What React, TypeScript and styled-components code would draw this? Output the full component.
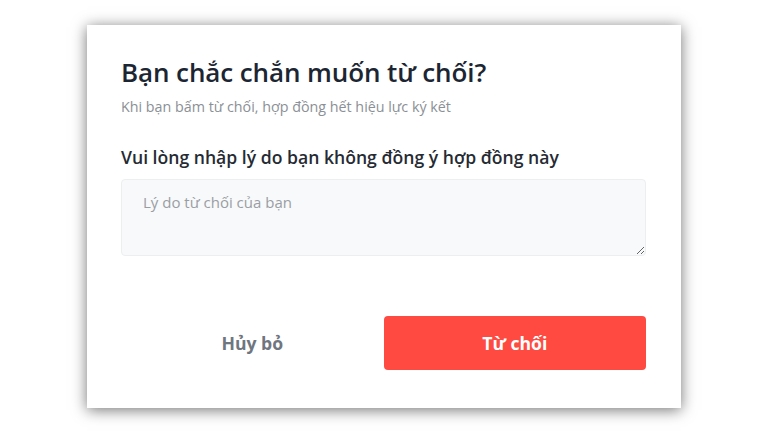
import React from "react";
import styled, { createGlobalStyle } from "styled-components";

const Global = createGlobalStyle`
  html, body { margin: 0; padding: 0; background: #ffffff; }
  * { box-sizing: border-box; }
  body { font-family: "Open Sans", "Noto Sans", sans-serif; }
`;

const Page = styled.div`
  width: 768px;
  height: 432px;
  display: flex;
  align-items: center;
  justify-content: center;
`;

const Dialog = styled.div`
  width: 594px;
  height: 383px;
  background: #ffffff;
  box-shadow: 0 2px 14px rgba(0, 0, 0, 0.55);
  padding: 29px 35px 38px 34px;
  display: flex;
  flex-direction: column;
`;

const Title = styled.h2`
  margin: 0;
  font-size: 26px;
  line-height: 36px;
  font-weight: 600;
  color: #1c2633;
  letter-spacing: -0.1px;
`;

const Subtitle = styled.p`
  margin: 7px 0 0;
  font-size: 14.3px;
  line-height: 20px;
  color: #8b9096;
`;

const Label = styled.label`
  margin-top: 28px;
  font-size: 17.6px;
  line-height: 24px;
  font-weight: 600;
  color: #262b33;
`;

const Reason = styled.textarea`
  margin-top: 10px;
  width: 100%;
  height: 77px;
  resize: vertical;
  border: 1px solid #eceef0;
  border-radius: 4px;
  background: #f8f9fa;
  padding: 12px 21px;
  font-family: "Open Sans", "Noto Sans", sans-serif;
  font-size: 15px;
  line-height: 20px;
  color: #333;
  outline: none;
  &::placeholder { color: #9a9ea4; }
`;

const Actions = styled.div`
  margin-top: auto;
  display: grid;
  grid-template-columns: 1fr 1fr;
`;

const Button = styled.button<{ $primary?: boolean }>`
  height: 54px;
  border: none;
  border-radius: 4px;
  font-family: "Open Sans", "Noto Sans", sans-serif;
  font-size: 17.6px;
  font-weight: 700;
  cursor: pointer;
  background: ${(p) => (p.$primary ? "#ff4a41" : "transparent")};
  color: ${(p) => (p.$primary ? "#ffffff" : "#6f7680")};
`;

export default function App() {
  return (
    <>
      <Global />
      <Page>
        <Dialog>
          <Title>Bạn chắc chắn muốn từ chối?</Title>
          <Subtitle>Khi bạn bấm từ chối, hợp đồng hết hiệu lực ký kết</Subtitle>
          <Label htmlFor="reason">Vui lòng nhập lý do bạn không đồng ý hợp đồng này</Label>
          <Reason id="reason" placeholder="Lý do từ chối của bạn" />
          <Actions>
            <Button>Hủy bỏ</Button>
            <Button $primary>Từ chối</Button>
          </Actions>
        </Dialog>
      </Page>
    </>
  );
}
